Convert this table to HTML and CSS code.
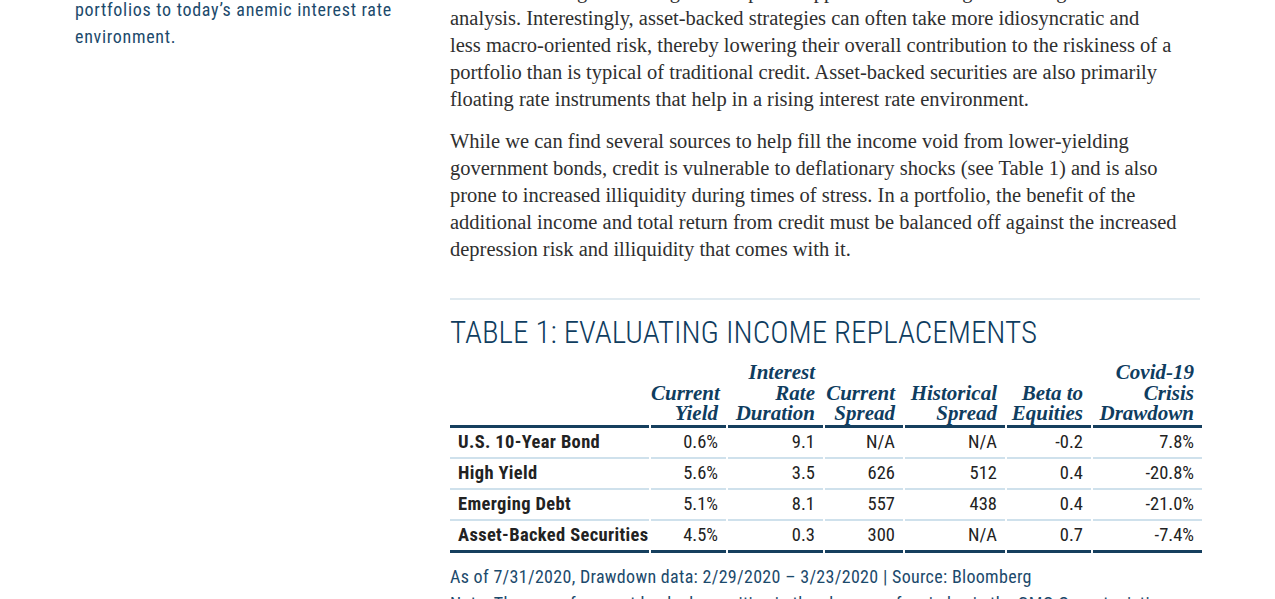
FILE: index.html
```html
<!DOCTYPE html>
<html lang="en">
<head>
<meta charset="utf-8">
<title>Evaluating Income Replacements</title>
<link rel="stylesheet" href="styles.css">
</head>
<body>
<div class="page">
  <aside class="sidebar">
    <p class="pullquote">Asset-backed strategies add resilience to portfolios to today’s anemic interest rate environment.</p>
  </aside>
  <main class="main">
    <p class="body-text">risk can be mitigated through a disciplined approach combining structuring with careful analysis. Interestingly, asset-backed strategies can often take more idiosyncratic and less&nbsp;macro-oriented risk, thereby lowering their overall contribution to the riskiness of a portfolio than is typical of traditional credit. Asset-backed securities are also primarily floating rate instruments that help in a rising interest rate environment.</p>
    <p class="body-text">While we can find several sources to help fill the income void from lower-yielding government bonds, credit is vulnerable to deflationary shocks (see Table 1) and is also prone to increased illiquidity during times of stress. In a portfolio, the benefit of the additional income and total return from credit must be balanced off against the increased depression risk and illiquidity that comes with it.</p>

    <section class="exhibit">
      <h2 class="exhibit-title">TABLE 1: EVALUATING INCOME REPLACEMENTS</h2>
      <table class="data-table">
        <thead>
          <tr>
            <th class="col-name"></th>
            <th>Current<br>Yield</th>
            <th>Interest<br>Rate<br>Duration</th>
            <th>Current<br>Spread</th>
            <th>Historical<br>Spread</th>
            <th>Beta to<br>Equities</th>
            <th>Covid-19<br>Crisis<br>Drawdown</th>
          </tr>
        </thead>
        <tbody>
          <tr>
            <td class="col-name">U.S. 10-Year Bond</td>
            <td>0.6%</td><td>9.1</td><td>N/A</td><td>N/A</td><td>-0.2</td><td>7.8%</td>
          </tr>
          <tr>
            <td class="col-name">High Yield</td>
            <td>5.6%</td><td>3.5</td><td>626</td><td>512</td><td>0.4</td><td>-20.8%</td>
          </tr>
          <tr>
            <td class="col-name">Emerging Debt</td>
            <td>5.1%</td><td>8.1</td><td>557</td><td>438</td><td>0.4</td><td>-21.0%</td>
          </tr>
          <tr>
            <td class="col-name">Asset-Backed Securities</td>
            <td>4.5%</td><td>0.3</td><td>300</td><td>N/A</td><td>0.7</td><td>-7.4%</td>
          </tr>
        </tbody>
      </table>
      <p class="caption">As of 7/31/2020, Drawdown data: 2/29/2020 – 3/23/2020 | Source: Bloomberg</p>
      <p class="caption">Note: The proxy for asset-backed securities in the absence of an index is the GMO Opportunistic Income Strategy.</p>
    </section>
  </main>
</div>
</body>
</html>
```

FILE: styles.css
```css
html, body {
  margin: 0;
  padding: 0;
  background: #ffffff;
}

.page {
  display: grid;
  grid-template-columns: 330px 750px;
  column-gap: 45px;
  padding-left: 75px;
  margin-top: -31px;
}

.pullquote {
  margin: 0;
  font-family: Roboto, "Liberation Sans", sans-serif;
  font-stretch: 75%;
  font-size: 18px;
  line-height: 27px;
  letter-spacing: 0.7px;
  color: #1c4a6c;
}

.main {
  padding-top: 9px;
}

.body-text {
  margin: 0 0 15px;
  font-family: "Liberation Serif", serif;
  font-size: 20.5px;
  line-height: 27px;
  color: #2f2f2f;
}

.exhibit {
  margin-top: 35px;
  border-top: 2px solid #e0eaf0;
  padding-top: 15px;
}

.exhibit-title {
  margin: 0 0 11px;
  font-family: Roboto, "Liberation Sans", sans-serif;
  font-stretch: 75%;
  font-weight: 300;
  font-size: 31px;
  line-height: 36px;
  letter-spacing: 0;
  color: #0f3d5f;
}

.data-table {
  table-layout: fixed;
  border-collapse: separate;
  border-spacing: 2px 0;
  margin: 0 -2px;
  width: 756px;
}

.data-table th,
.data-table td {
  box-sizing: border-box;
  white-space: nowrap;
}

.data-table th {
  font-family: "Liberation Serif", serif;
  font-style: italic;
  font-weight: bold;
  font-size: 21px;
  line-height: 20.5px;
  color: #0f3d5f;
  text-align: right;
  vertical-align: bottom;
  padding: 0 8px 1px 0;
  border-bottom: 3px solid #163f5e;
}

.data-table td {
  font-family: Roboto, "Liberation Sans", sans-serif;
  font-stretch: 87.5%;
  font-size: 18.5px;
  line-height: 29px;
  color: #222222;
  text-align: right;
  padding: 0 8px 0 0;
  border-bottom: 2px solid #cfe1ec;
}

.data-table th:nth-child(1) { width: 199px; }
.data-table th:nth-child(2) { width: 75px; }
.data-table th:nth-child(3) { width: 95px; }
.data-table th:nth-child(4) { width: 78px; }
.data-table th:nth-child(5) { width: 100px; }
.data-table th:nth-child(6) { width: 84px; }
.data-table th:nth-child(7) { width: 109px; }

.data-table td.col-name {
  text-align: left;
  padding-left: 8px;
  font-weight: bold;
  font-stretch: 75%;
  letter-spacing: 0.35px;
}

.data-table tbody tr:last-child td {
  border-bottom: 3px solid #163f5e;
}

.caption {
  margin: 10px 0 0;
  font-family: Roboto, "Liberation Sans", sans-serif;
  font-stretch: 75%;
  font-size: 18px;
  line-height: 27px;
  letter-spacing: 0.3px;
  color: #1c4a6c;
}

.caption + .caption {
  margin-top: 0;
}
```
